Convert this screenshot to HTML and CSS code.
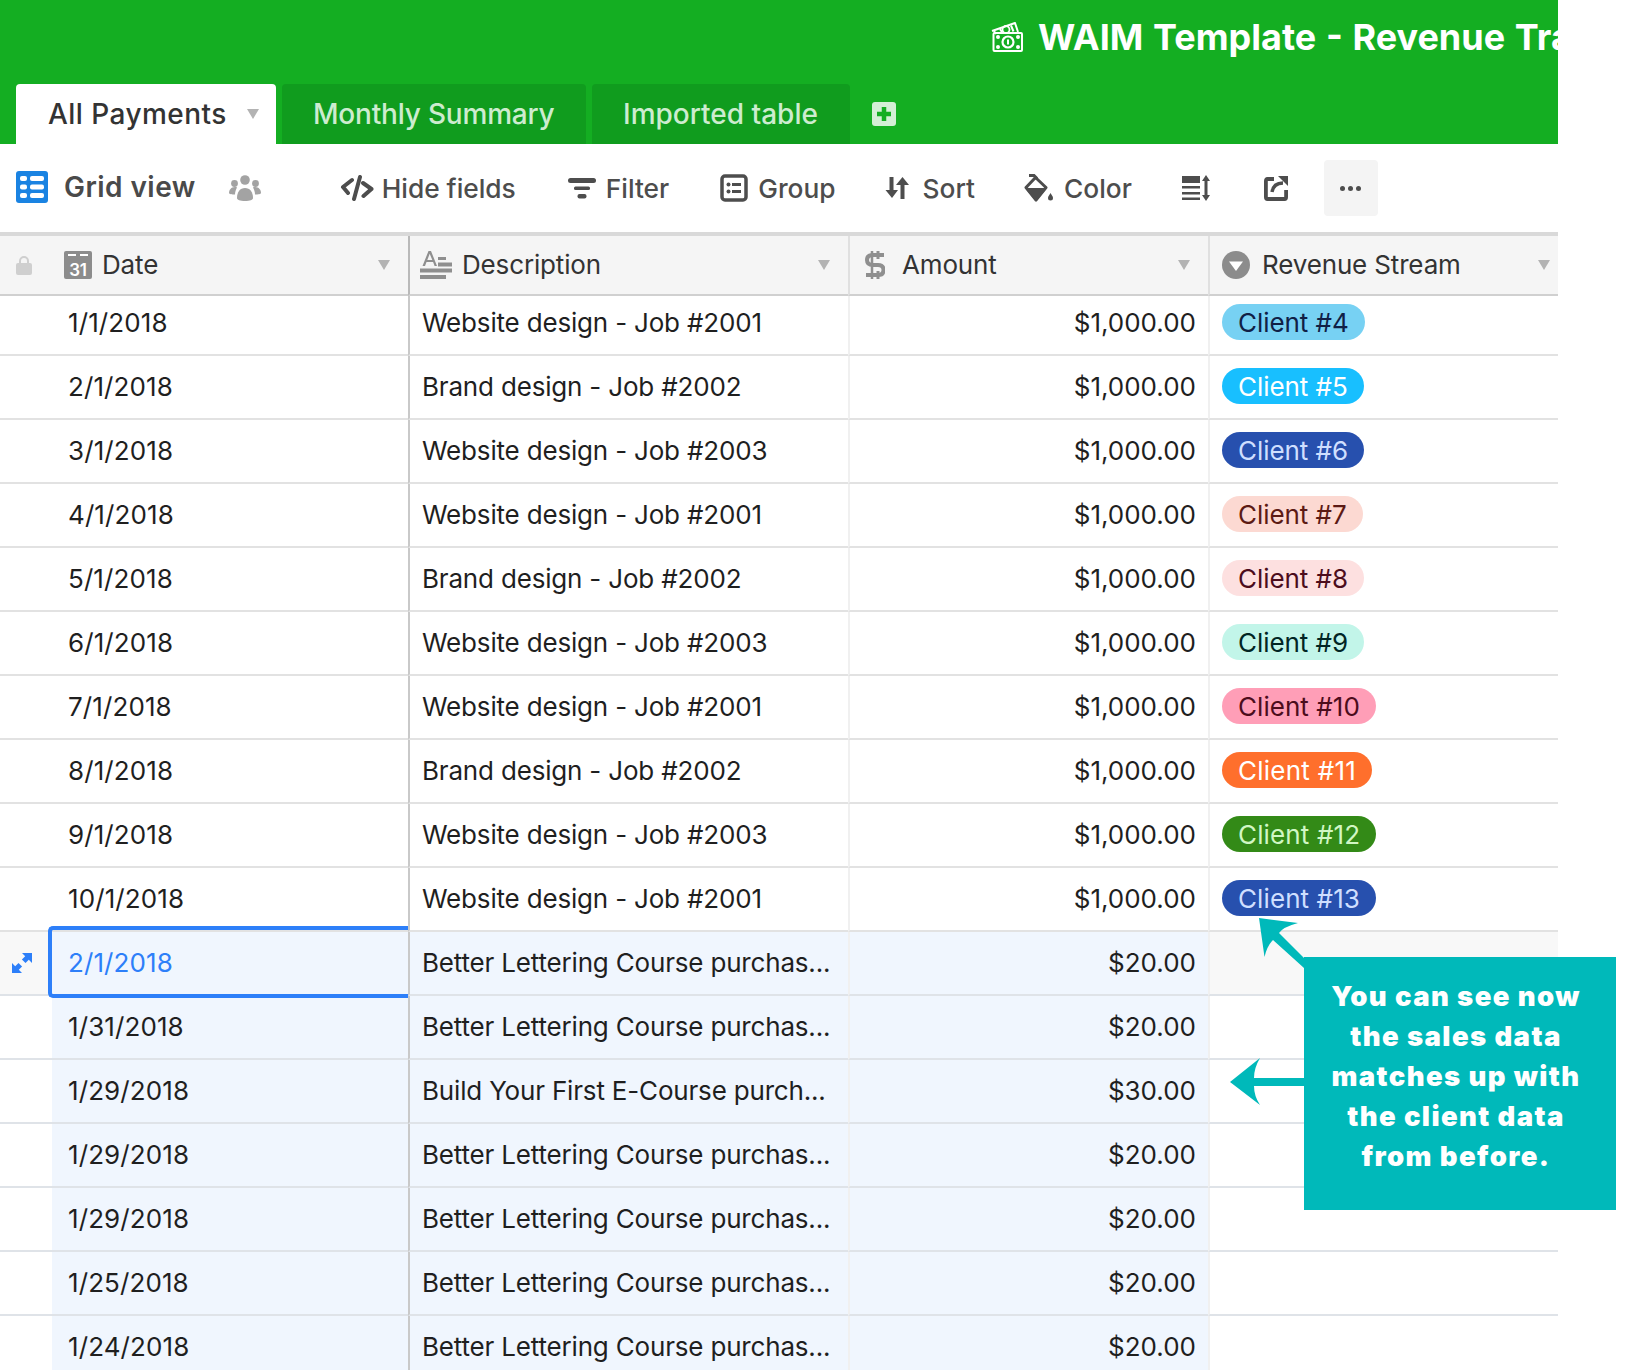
FILE: index.html
```html
<!DOCTYPE html>
<html lang="en">
<head>
<meta charset="utf-8">
<title>WAIM Template - Revenue Tracker</title>
<link rel="stylesheet" href="styles.css">
</head>
<body>
<div class="page">
  <header class="appbar">
    <div class="titlebar">
      <svg class="money" viewBox="0 0 32 30" fill="none" stroke="#fff" stroke-width="2">
        <path d="M1 9 24 1l3 9" stroke-linejoin="round"/>
        <path d="M3 9l2 3M9 7l2.500 4M20 3.500l2.500 6" stroke-width="2"/>
        <circle cx="15" cy="7.500" r="3.500" stroke-width="1.800"/>
        <rect x="2.500" y="11" width="28.500" height="18" rx="1"/>
        <circle cx="17" cy="20" r="5.500" stroke-width="2.200"/>
        <path d="M17 17.500v5" stroke-width="2"/>
        <g fill="#fff" stroke="none"><circle cx="7" cy="15" r="2"/><circle cx="27" cy="15" r="2"/><circle cx="7" cy="25" r="2"/><circle cx="27" cy="25" r="2"/></g>
      </svg>
      <h1 class="title">WAIM Template - Revenue Tracker</h1>
    </div>
    <nav class="tabs">
      <div class="tab tab-active"><span>All Payments</span><i class="caret caret-tab"></i></div>
      <div class="tab tab-monthly">Monthly Summary</div>
      <div class="tab tab-imported">Imported table</div>
      <svg class="addtab" viewBox="0 0 24 24"><rect width="24" height="24" rx="3" fill="#d4efd6"/><path d="M12 5v14M5 12h14" stroke="#14ae22" stroke-width="4.500"/></svg>
    </nav>
  </header>

  <div class="toolbar">
    <svg class="ti-grid" viewBox="0 0 32 32"><rect width="32" height="32" rx="3" fill="#1a83e2"/><g fill="#fff"><rect x="4" y="5" width="7" height="5" rx="2"/><rect x="14" y="5" width="14" height="5" rx="2"/><rect x="4" y="13.500" width="7" height="5" rx="2"/><rect x="14" y="13.500" width="14" height="5" rx="2"/><rect x="4" y="22" width="7" height="5" rx="2"/><rect x="14" y="22" width="14" height="5" rx="2"/></g></svg>
    <span class="viewname">Grid view</span>
    <svg class="ti-team" viewBox="0 0 32 26" fill="#a3a3a3"><circle cx="16" cy="5" r="4.800"/><circle cx="5.500" cy="8.500" r="3.400"/><circle cx="26.500" cy="8.500" r="3.400"/><path d="M8 23c0-6 3-10 8-10s8 4 8 10c0 2-3 3-8 3s-8-1-8-3z"/><path d="M0 18c0-3 2-6 6-6 1 0 1.500 0 2 .5-1 2-2 4-2 7-3 0-6-.5-6-1.500zM32 18c0-3-2-6-6-6-1 0-1.500 0-2 .5 1 2 2 4 2 7 3 0 6-.5 6-1.500z"/></svg>

    <div class="tool tool-hide">
      <svg class="ti-hide" viewBox="0 0 34 26" fill="none" stroke="#4d4d4d" stroke-width="4" stroke-linecap="round" stroke-linejoin="round"><path d="M12 5 3 12l5 6M23 8l8.500 6-8 7M20 2 14 24"/></svg>
      <span>Hide fields</span>
    </div>
    <div class="tool tool-filter">
      <svg class="ti-filter" viewBox="0 0 28 24" fill="#4d4d4d"><rect y="2" width="28" height="5" rx="2.500"/><rect x="6" y="10.500" width="16" height="3.500" rx="1.500"/><rect x="9.500" y="18" width="9" height="4.500" rx="2"/></svg>
      <span>Filter</span>
    </div>
    <div class="tool tool-group">
      <svg class="ti-group" viewBox="0 0 28 28" fill="none" stroke="#4d4d4d"><rect x="2" y="2" width="24" height="24" rx="3" stroke-width="3.500"/><g fill="#4d4d4d" stroke="none"><circle cx="8.500" cy="10.500" r="2"/><circle cx="8.500" cy="17.500" r="2"/><rect x="12" y="9" width="9" height="3"/><rect x="12" y="16" width="9" height="3"/></g></svg>
      <span>Group</span>
    </div>
    <div class="tool tool-sort">
      <svg class="ti-sort" viewBox="0 0 26 26" fill="#4d4d4d"><path d="M5.500 2h4v13H14l-6 8-6.500-8h4zM16.500 24V10H12L18.500 2 25 10h-4.500v14z"/></svg>
      <span>Sort</span>
    </div>
    <div class="tool tool-color">
      <svg class="ti-color" viewBox="0 0 30 28"><path d="M2 13.500 11.500 3.500 22 13.500 12 26z" fill="#fff" stroke="#4d4d4d" stroke-width="3" stroke-linejoin="round"/><path d="M1 14h22L12 27.500z" fill="#4d4d4d"/><path d="M5 1.500h5l3 3" fill="none" stroke="#4d4d4d" stroke-width="3"/><path d="M26.500 19c1.200 2 2.500 3.500 2.500 5a2.500 2.500 0 0 1-5 0c0-1.500 1.300-3 2.500-5z" fill="#4d4d4d"/></svg>
      <span>Color</span>
    </div>
    <svg class="ti-rows" viewBox="0 0 28 26" fill="#4d4d4d"><rect y="1" width="18" height="7"/><rect y="11" width="18" height="2.500"/><rect y="17" width="18" height="2.500"/><rect y="22.500" width="18" height="2.500"/><path d="M24 0l4 6h-2.500v14H28l-4 6-4-6h2.500V6H20z"/></svg>
    <svg class="ti-share" viewBox="0 0 24 26" fill="none" stroke="#4d4d4d" stroke-width="3.800"><path d="M10 4H3.500Q1.900 4 1.900 6v16q0 2 1.600 2h17q1.600 0 1.600-2v-7"/><path d="M8 17c1-6 5-9 11-9" stroke-width="3.400"/><path d="M14 1h10v10z" fill="#4d4d4d" stroke="none"/></svg>
    <div class="more"><i></i><i></i><i></i></div>
  </div>

  <div class="grid">
    <div class="row row-head">
      <div class="cell gutter"><svg class="hi-lock" viewBox="0 0 16 20" fill="#cfcfcf"><path d="M3 8V6a5 5 0 0 1 10 0v2h-2V6a3 3 0 0 0-6 0v2z"/><rect y="8" width="16" height="12" rx="2"/></svg></div>
      <div class="cell datecol head-date">
        <svg class="hi-cal" viewBox="0 0 28 28"><rect width="28" height="28" rx="2" fill="#8c8c8c"/><rect x="4" y="3" width="8" height="2" fill="#fff"/><rect x="16" y="3" width="8" height="2" fill="#fff"/><text class="cal-text" x="14" y="25" text-anchor="middle">31</text></svg>
        <span class="hlabel">Date</span><i class="caret"></i>
      </div>
      <div class="cell desc head-desc">
        <svg class="hi-text" viewBox="0 0 32 28" fill="#8f8f8f"><path d="M8.500 0h2.500l6 15h-2.400l-1.500-4H6.500l-1.500 4H2.500zm1.200 2.800L7.300 9h5z"/><rect x="18" y="6" width="8" height="3"/><rect x="18" y="11.500" width="14" height="4"/><rect y="17.500" width="32" height="4"/><rect y="24" width="26" height="4"/></svg>
        <span class="hlabel">Description</span><i class="caret"></i>
      </div>
      <div class="cell amt head-amt">
        <svg class="hi-dollar" viewBox="0 0 20 30" fill="none" stroke="#8f8f8f" stroke-width="4"><path d="M19 5H8Q2 5 2 10t6 5h5q5.500 0 5.500 5t-5.500 5H1"/><path d="M7 1v28" stroke-width="2.500"/><path d="M13 1v8M13 21v8" stroke-width="3"/></svg>
        <span class="hlabel">Amount</span><i class="caret"></i>
      </div>
      <div class="cell rev head-rev">
        <svg class="hi-select" viewBox="0 0 28 28"><circle cx="14" cy="14" r="14" fill="#8c8c8c"/><path d="M7 10.500h14L14 20z" fill="#fff"/></svg>
        <span class="hlabel">Revenue Stream</span><i class="caret"></i>
      </div>
    </div>

    <div class="row row-first"><div class="cell gutter"></div><div class="cell datecol">1/1/2018</div><div class="cell desc">Website design - Job #2001</div><div class="cell amt">$1,000.00</div><div class="cell rev"><span class="pill p4">Client #4</span></div></div>
    <div class="row"><div class="cell gutter"></div><div class="cell datecol">2/1/2018</div><div class="cell desc">Brand design - Job #2002</div><div class="cell amt">$1,000.00</div><div class="cell rev"><span class="pill p5">Client #5</span></div></div>
    <div class="row"><div class="cell gutter"></div><div class="cell datecol">3/1/2018</div><div class="cell desc">Website design - Job #2003</div><div class="cell amt">$1,000.00</div><div class="cell rev"><span class="pill p6">Client #6</span></div></div>
    <div class="row"><div class="cell gutter"></div><div class="cell datecol">4/1/2018</div><div class="cell desc">Website design - Job #2001</div><div class="cell amt">$1,000.00</div><div class="cell rev"><span class="pill p7">Client #7</span></div></div>
    <div class="row"><div class="cell gutter"></div><div class="cell datecol">5/1/2018</div><div class="cell desc">Brand design - Job #2002</div><div class="cell amt">$1,000.00</div><div class="cell rev"><span class="pill p8">Client #8</span></div></div>
    <div class="row"><div class="cell gutter"></div><div class="cell datecol">6/1/2018</div><div class="cell desc">Website design - Job #2003</div><div class="cell amt">$1,000.00</div><div class="cell rev"><span class="pill p9">Client #9</span></div></div>
    <div class="row"><div class="cell gutter"></div><div class="cell datecol">7/1/2018</div><div class="cell desc">Website design - Job #2001</div><div class="cell amt">$1,000.00</div><div class="cell rev"><span class="pill p10">Client #10</span></div></div>
    <div class="row"><div class="cell gutter"></div><div class="cell datecol">8/1/2018</div><div class="cell desc">Brand design - Job #2002</div><div class="cell amt">$1,000.00</div><div class="cell rev"><span class="pill p11">Client #11</span></div></div>
    <div class="row"><div class="cell gutter"></div><div class="cell datecol">9/1/2018</div><div class="cell desc">Website design - Job #2003</div><div class="cell amt">$1,000.00</div><div class="cell rev"><span class="pill p12">Client #12</span></div></div>
    <div class="row"><div class="cell gutter"></div><div class="cell datecol">10/1/2018</div><div class="cell desc">Website design - Job #2001</div><div class="cell amt">$1,000.00</div><div class="cell rev"><span class="pill p13">Client #13</span></div></div>

    <div class="row row-fill row-hover">
      <div class="cell gutter"><svg class="expand" viewBox="0 0 20 20" fill="#2d7ff9"><path d="M10 0h10v10l-3.200-3.200-3.300 3.300-3.600-3.600 3.300-3.300zM0 10l3.200 3.200 3.300-3.300 3.600 3.600-3.300 3.300L10 20H0z"/></svg></div>
      <div class="cell datecol selected">2/1/2018<div class="selbox"></div></div>
      <div class="cell desc">Better Lettering Course purchas...</div><div class="cell amt">$20.00</div><div class="cell rev"></div>
    </div>
    <div class="row row-fill"><div class="cell gutter"></div><div class="cell datecol">1/31/2018</div><div class="cell desc">Better Lettering Course purchas...</div><div class="cell amt">$20.00</div><div class="cell rev"></div></div>
    <div class="row row-fill"><div class="cell gutter"></div><div class="cell datecol">1/29/2018</div><div class="cell desc">Build Your First E-Course purch...</div><div class="cell amt">$30.00</div><div class="cell rev"></div></div>
    <div class="row row-fill"><div class="cell gutter"></div><div class="cell datecol">1/29/2018</div><div class="cell desc">Better Lettering Course purchas...</div><div class="cell amt">$20.00</div><div class="cell rev"></div></div>
    <div class="row row-fill"><div class="cell gutter"></div><div class="cell datecol">1/29/2018</div><div class="cell desc">Better Lettering Course purchas...</div><div class="cell amt">$20.00</div><div class="cell rev"></div></div>
    <div class="row row-fill"><div class="cell gutter"></div><div class="cell datecol">1/25/2018</div><div class="cell desc">Better Lettering Course purchas...</div><div class="cell amt">$20.00</div><div class="cell rev"></div></div>
    <div class="row row-fill"><div class="cell gutter"></div><div class="cell datecol">1/24/2018</div><div class="cell desc">Better Lettering Course purchas...</div><div class="cell amt">$20.00</div><div class="cell rev"></div></div>
  </div>

  <svg class="arrows" viewBox="0 0 90 200" fill="#00b9ba">
    <path d="M29 0 68 5Q53 9 49 15L74 40V50L43 22Q37 28 34.500 39Z"/>
    <path d="M0 164 30 140Q24 150 24 160H80V168H24Q24 178 30 187Z"/>
  </svg>
  <aside class="callout">You can see now<br>the sales data<br>matches up with<br>the client data<br>from before.</aside>
</div>
</body>
</html>
```
FILE: styles.css
```css
* { box-sizing: border-box; }
html, body { margin: 0; padding: 0; background: #fff; }
body { font-family: Inter, "Noto Sans", "Liberation Sans", sans-serif; color: #1f1f1f; }
.page { position: relative; width: 1628px; height: 1370px; overflow: hidden; background: #fff; }

.appbar { width: 1558px; height: 144px; background: #14ae22; overflow: hidden; }
.titlebar { height: 84px; display: flex; align-items: center; padding: 0 0 10px 991px; gap: 15px; white-space: nowrap; }
.money { width: 32px; height: 30px; flex: none; }
.title { margin: 0; font-size: 36px; line-height: 44px; font-weight: 700; word-spacing: 1.2px; color: #fff; }

.tabs { height: 60px; display: flex; align-items: stretch; padding-left: 16px; gap: 6px; }
.tab { display: flex; align-items: center; font-size: 28px; font-weight: 500; border-radius: 4px 4px 0 0; padding: 0 0 0 32px; }
.tab-active { width: 260px; background: #fff; color: #333; letter-spacing: .45px; }
.tab-active .caret-tab { margin-left: 20px; margin-top: 0; }
.tab-monthly { width: 304px; background: #109c1e; color: #cdeccf; letter-spacing: -.2px; padding-left: 31px; }
.tab-imported { width: 258px; background: #109c1e; color: #cdeccf; padding-left: 31px; }
.addtab { width: 24px; height: 24px; align-self: center; margin-left: 16px; }

.caret { display: block; width: 0; height: 0; flex: none; border-left: 6.500px solid transparent; border-right: 6.500px solid transparent; border-top: 10px solid #b3b3b3; margin-left: auto; }

.toolbar { height: 88px; display: flex; align-items: center; padding-left: 16px; color: #4d4d4d; font-size: 26.3px; font-weight: 500; white-space: nowrap; }
.ti-grid { width: 32px; height: 32px; flex: none; margin-top: -2px; }
.viewname { margin-left: 16px; font-weight: 600; font-size: 28px; letter-spacing: .45px; color: #4a4a4a; margin-top: -2px; }
.ti-team { width: 32px; height: 26px; margin-left: 33px; flex: none; }
.tool { display: flex; align-items: center; }
.tool-hide { margin-left: 79px; gap: 8px; }
.tool-filter { margin-left: 52px; gap: 10px; }
.tool-group { margin-left: 51px; gap: 10px; }
.tool-sort { margin-left: 48px; gap: 13px; }
.tool-color { margin-left: 49px; gap: 10px; }
.ti-hide { width: 34px; height: 26px; }
.ti-filter { width: 28px; height: 24px; }
.ti-group { width: 28px; height: 28px; }
.ti-sort { width: 26px; height: 26px; }
.ti-color { width: 30px; height: 28px; }
.ti-rows { width: 28px; height: 26px; margin-left: 50px; flex: none; }
.ti-share { width: 24px; height: 26px; margin-left: 54px; flex: none; }
.more { width: 54px; height: 56px; margin-left: 36px; background: #f4f4f4; border-radius: 4px; display: flex; align-items: center; justify-content: center; gap: 3px; flex: none; }
.more i { width: 5px; height: 5px; border-radius: 50%; background: #4d4d4d; }

.grid { width: 1558px; font-size: 26px; }
.row { display: grid; grid-template-columns: 48px 360px 440px 360px 350px; height: 64px; }
.cell { display: flex; align-items: center; border-bottom: 2px solid #e2e2e2; padding-bottom: 1px; white-space: nowrap; position: relative; }
.datecol { padding-left: 20px; letter-spacing: .1px; }
.desc { border-left: 2px solid #c9c9c9; padding-left: 12px; letter-spacing: -.18px; }
.amt { border-left: 2px solid #f0f0f0; justify-content: flex-end; padding-right: 12px; }
.rev { border-left: 2px solid #f0f0f0; padding-left: 12px; padding-bottom: 2px; }

.row-head { height: 64px; background: #f5f5f5; border-top: 4px solid #d9d9d9; }
.row-head .cell { border-bottom: 2px solid #d0d0d0; padding-bottom: 1px; color: #333; letter-spacing: -.15px; }
.row-head .gutter { padding-left: 16px; }
.row-head .desc { border-left-color: #b9b9b9; padding-left: 10px; }
.row-head .amt { border-left-color: #e0e0e0; justify-content: flex-start; padding-left: 15px; padding-right: 0; }
.row-head .rev { border-left-color: #e0e0e0; padding-left: 12px; }
.head-date { padding-left: 16px; padding-right: 18px; }
.head-desc { padding-right: 18px; }
.head-amt .caret { margin-right: 18px; }
.head-rev { padding-right: 8px; }
.hlabel { margin-left: 10px; }
.head-amt .hlabel { margin-left: 17px; }
.head-rev .hlabel { margin-left: 12px; }
.hi-lock { width: 16px; height: 20px; }
.hi-cal { width: 28px; height: 28px; flex: none; }
.cal-text { font-family: Inter, sans-serif; font-size: 17px; font-weight: 600; fill: #fff; }
.hi-text { width: 32px; height: 28px; flex: none; }
.hi-dollar { width: 20px; height: 30px; flex: none; }
.hi-select { width: 28px; height: 28px; flex: none; }

.row-first { height: 60px; }
.row-first .cell { padding-bottom: 5px; }
.row-first .rev { padding-bottom: 6px; }

.pill { display: inline-block; height: 36px; line-height: 37px; padding: 0 16px; border-radius: 18px; font-size: 26px; letter-spacing: -.05px; }
.p4 { background: #77d1f3; color: #102046; }
.p5 { background: #18bfff; color: #fff; }
.p6 { background: #2750ae; color: #cfdfff; }
.p7 { background: #fcd9d2; color: #5c1a14; }
.p8 { background: #fde0e0; color: #4c0c1c; }
.p9 { background: #c2f5e9; color: #012524; }
.p10 { background: #ff9eb7; color: #4c0c1c; letter-spacing: .05px; }
.p11 { background: #ff6f2c; color: #fff; letter-spacing: .25px; }
.p12 { background: #338a17; color: #d1f7c4; letter-spacing: .15px; }
.p13 { background: #2750ae; color: #cfdfff; letter-spacing: .1px; }

.row-fill .datecol { background: linear-gradient(#f0f6fe, #f0f6fe) no-repeat 4px 0 / 100% 100%; }
.row-fill .desc, .row-fill .amt { background: #f0f6fe; }
.row-fill .cell { border-bottom-color: #dfe3e8; }
.row-hover .gutter, .row-hover .rev { background: #f8f8f8; }
.gutter { justify-content: center; }
.row-head .gutter { justify-content: flex-start; }
.expand { width: 20px; height: 20px; margin-left: -4px; }
.selected { color: #2d7ff9; z-index: 1; }
.selbox { position: absolute; left: 0; right: 0; top: -6px; bottom: -4px; border: 4px solid #2d7ff9; border-right: 0; border-radius: 5px 0 0 5px; }

.arrows { position: absolute; left: 1230px; top: 918px; width: 90px; height: 200px; }
.callout { position: absolute; left: 1304px; top: 957px; width: 312px; height: 253px; padding: 19px 8px 0 0; background: #00b9ba; color: #fff; text-align: center; font-size: 27.5px; line-height: 40px; font-weight: 900; letter-spacing: 1.4px; font-family: Inter, "Open Sans", sans-serif; }
```
